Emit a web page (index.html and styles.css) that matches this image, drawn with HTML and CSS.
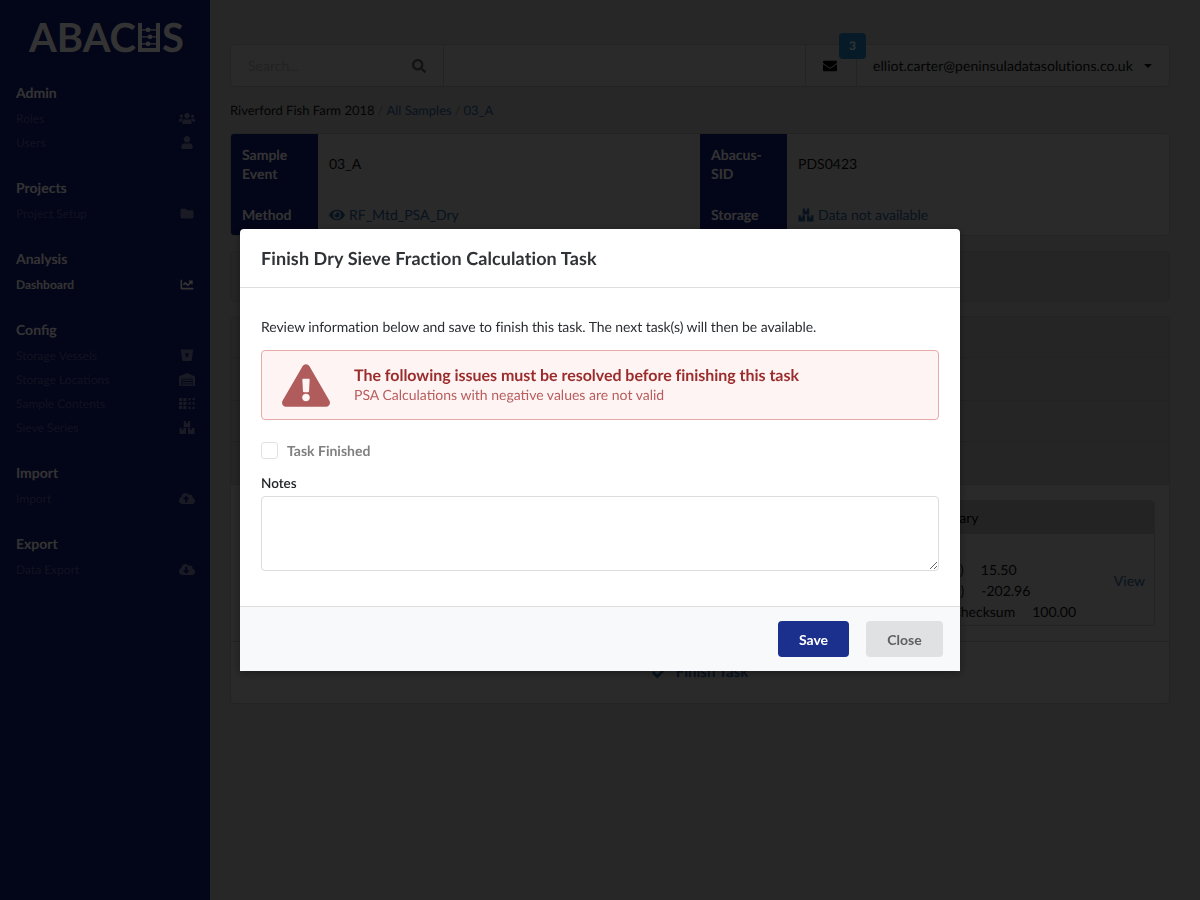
FILE: index.html
```html
<!DOCTYPE html>
<html lang="en">
<head>
<meta charset="utf-8">
<title>Abacus</title>
<link rel="stylesheet" href="styles.css">
</head>
<body>
<svg class="defs" aria-hidden="true">
  <symbol id="i-users" viewBox="0 0 640 512"><path d="M96 224c35.3 0 64-28.7 64-64s-28.7-64-64-64-64 28.7-64 64 28.7 64 64 64zm448 0c35.3 0 64-28.7 64-64s-28.7-64-64-64-64 28.7-64 64 28.7 64 64 64zm32 32h-64c-17.6 0-33.5 7.1-45.1 18.6 40.3 22.1 68.9 62 75.1 109.4h66c17.7 0 32-14.3 32-32v-32c0-35.3-28.7-64-64-64zm-256 0c61.9 0 112-50.1 112-112S381.9 32 320 32 208 82.1 208 144s50.1 112 112 112zm76.8 32h-8.3c-20.8 10-43.9 16-68.5 16s-47.6-6-68.5-16h-8.3C179.6 288 128 339.6 128 403.2V432c0 26.5 21.5 48 48 48h288c26.5 0 48-21.5 48-48v-28.8c0-63.6-51.6-115.2-115.2-115.2zm-223.7-13.4C161.5 263.1 145.6 256 128 256H64c-35.3 0-64 28.7-64 64v32c0 17.7 14.3 32 32 32h65.9c6.3-47.4 34.9-87.3 75.2-109.4z"/></symbol>
  <symbol id="i-user" viewBox="0 0 448 512"><path d="M224 256c70.7 0 128-57.3 128-128S294.7 0 224 0 96 57.3 96 128s57.3 128 128 128zm89.6 32h-16.7c-22.2 10.2-46.9 16-72.9 16s-50.6-5.8-72.9-16h-16.7C60.2 288 0 348.2 0 422.4V464c0 26.5 21.5 48 48 48h352c26.5 0 48-21.5 48-48v-41.6c0-74.2-60.2-134.4-134.4-134.4z"/></symbol>
  <symbol id="i-folder" viewBox="0 0 512 512"><path d="M464 128H272l-64-64H48C21.49 64 0 85.49 0 112v288c0 26.51 21.49 48 48 48h416c26.51 0 48-21.49 48-48V176c0-26.51-21.49-48-48-48z"/></symbol>
  <symbol id="i-chart" viewBox="0 0 512 512"><path d="M496 384H64V80c0-8.84-7.16-16-16-16H16C7.16 64 0 71.16 0 80v336c0 17.67 14.33 32 32 32h464c8.84 0 16-7.16 16-16v-32c0-8.84-7.16-16-16-16zM464 96H345.94c-21.38 0-32.09 25.85-16.97 40.97l32.4 32.4L288 242.75l-73.37-73.37c-12.5-12.5-32.76-12.5-45.25 0l-68.69 68.69c-6.25 6.25-6.25 16.38 0 22.63l22.62 22.62c6.25 6.25 16.38 6.25 22.63 0L192 237.25l73.37 73.37c12.5 12.5 32.76 12.5 45.25 0l96-96 32.4 32.4c15.12 15.12 40.97 4.41 40.97-16.97V112c.01-8.84-7.15-16-15.99-16z"/></symbol>
  <symbol id="i-vessel" viewBox="0 0 512 512"><path fill-rule="evenodd" d="M32 16h448c14 0 22 10 20 24l-56 400c-3 20-14 32-34 32H102c-20 0-31-12-34-32L12 40c-2-14 6-24 20-24zM176 170h160l-40 130c-4 14-12 20-24 20h-32c-12 0-20-6-24-20z"/></symbol>
  <symbol id="i-warehouse" viewBox="0 0 640 512"><path d="M504 352H136.4c-4.4 0-8 3.6-8 8l-.1 48c0 4.4 3.6 8 8 8H504c4.4 0 8-3.6 8-8v-48c0-4.4-3.6-8-8-8zm0 96H136.1c-4.4 0-8 3.6-8 8l-.1 48c0 4.4 3.6 8 8 8h368c4.4 0 8-3.6 8-8v-48c0-4.4-3.6-8-8-8zm0-192H136.6c-4.4 0-8 3.6-8 8l-.1 48c0 4.4 3.6 8 8 8H504c4.4 0 8-3.6 8-8v-48c0-4.4-3.6-8-8-8zm106.5-139L338.4 3.7a48.15 48.15 0 0 0-36.9 0L29.5 117C11.7 124.5 0 141.9 0 161.3V504c0 4.4 3.6 8 8 8h80c4.4 0 8-3.6 8-8V256c0-17.6 14.6-32 32.6-32h382.8c18 0 32.6 14.4 32.6 32v248c0 4.4 3.6 8 8 8h80c4.4 0 8-3.6 8-8V161.3c0-19.4-11.7-36.8-29.5-44.3z"/></symbol>
  <symbol id="i-grid" viewBox="0 0 640 512"><path d="M0 32h128v128H0zM170 32h128v128H170zM0 192h128v128H0zM170 192h128v128H170zM0 352h128v128H0zM170 352h128v128H170z"/><path d="M380 32h90v90h-90zM540 32h90v90h-90zM380 210h90v90h-90zM540 210h90v90h-90zM380 390h90v90h-90zM540 390h90v90h-90z"/></symbol>
  <symbol id="i-cubes" viewBox="0 0 640 512"><path fill-rule="evenodd" d="M190 0h90v90h80V0h90v240H190zM20 270h90v90h60v-90h110v242H20zM360 270h90v90h60v-90h110v242H360z"/></symbol>
  <symbol id="i-up" viewBox="0 0 640 512"><path d="M537.6 226.6c4.1-10.7 6.4-22.4 6.4-34.6 0-53-43-96-96-96-19.7 0-38.1 6-53.3 16.2C367 64.2 315.3 32 256 32c-88.4 0-160 71.6-160 160 0 2.7.1 5.4.2 8.1C40.2 219.8 0 273.2 0 336c0 79.5 64.5 144 144 144h368c70.7 0 128-57.3 128-128 0-61.9-44-113.6-102.4-125.4zM393.4 288H328v112c0 8.8-7.2 16-16 16h-48c-8.8 0-16-7.2-16-16V288h-65.4c-14.3 0-21.4-17.2-11.3-27.3l105.4-105.4c6.2-6.2 16.4-6.2 22.6 0l105.4 105.4c10.1 10.1 3 27.3-11.3 27.3z"/></symbol>
  <symbol id="i-down" viewBox="0 0 640 512"><path d="M537.6 226.6c4.1-10.7 6.4-22.4 6.4-34.6 0-53-43-96-96-96-19.7 0-38.1 6-53.3 16.2C367 64.2 315.3 32 256 32c-88.4 0-160 71.6-160 160 0 2.7.1 5.4.2 8.1C40.2 219.8 0 273.2 0 336c0 79.5 64.5 144 144 144h368c70.7 0 128-57.3 128-128 0-61.9-44-113.6-102.4-125.4zm-132.9 88.7L299.3 420.7c-6.2 6.2-16.4 6.2-22.6 0L171.3 315.3c-10.1-10.1-2.9-27.3 11.3-27.3H248V176c0-8.8 7.2-16 16-16h48c8.8 0 16 7.2 16 16v112h65.4c14.2 0 21.4 17.2 11.3 27.3z"/></symbol>
  <symbol id="i-search" viewBox="0 0 512 512"><path d="M505 442.7L405.3 343c-4.5-4.5-10.6-7-17-7H372c27.6-35.3 44-79.7 44-128C416 93.1 322.9 0 208 0S0 93.1 0 208s93.1 208 208 208c48.3 0 92.7-16.4 128-44v16.3c0 6.4 2.5 12.5 7 17l99.7 99.7c9.4 9.4 24.6 9.4 33.9 0l28.3-28.3c9.4-9.4 9.4-24.6.1-34zM208 336c-70.7 0-128-57.2-128-128 0-70.7 57.2-128 128-128 70.7 0 128 57.2 128 128 0 70.7-57.2 128-128 128z"/></symbol>
  <symbol id="i-mail" viewBox="0 0 512 512"><path d="M502.3 190.8c3.9-3.1 9.7-.2 9.7 4.7V400c0 26.5-21.5 48-48 48H48c-26.5 0-48-21.5-48-48V195.6c0-5 5.7-7.8 9.7-4.7 22.4 17.4 52.1 39.5 154.1 113.6 21.1 15.4 56.7 47.8 92.2 47.6 35.7.3 72-32.8 92.3-47.6 102-74.1 131.6-96.3 154-113.7zM256 320c23.2.4 56.6-29.2 73.4-41.4 132.7-96.3 142.8-104.7 173.4-128.7 5.8-4.5 9.2-11.5 9.2-18.9v-19c0-26.5-21.5-48-48-48H48C21.5 64 0 85.5 0 112v19c0 7.4 3.4 14.3 9.2 18.9 30.6 23.9 40.7 32.4 173.4 128.7 16.8 12.2 50.2 41.8 73.4 41.4z"/></symbol>
  <symbol id="i-eye" viewBox="0 0 576 512"><path d="M572.52 241.4C518.29 135.59 410.93 64 288 64S57.68 135.64 3.48 241.41a32.35 32.35 0 0 0 0 29.19C57.71 376.41 165.07 448 288 448s230.32-71.64 284.52-177.41a32.35 32.35 0 0 0 0-29.19zM288 400a144 144 0 1 1 144-144 143.93 143.93 0 0 1-144 144zm0-240a95.31 95.31 0 0 0-25.31 3.79 47.85 47.85 0 0 1-66.9 66.9A95.78 95.78 0 1 0 288 160z"/></symbol>
  <symbol id="i-check" viewBox="0 0 512 512"><path d="M173.898 439.404l-166.4-166.4c-9.997-9.997-9.997-26.206 0-36.204l36.203-36.204c9.997-9.998 26.207-9.998 36.204 0L192 312.69 432.095 72.596c9.997-9.997 26.207-9.997 36.204 0l36.203 36.204c9.997 9.997 9.997 26.206 0 36.204l-294.4 294.401c-9.998 9.997-26.207 9.997-36.204-.001z"/></symbol>
  <symbol id="i-warn" viewBox="0 0 576 512"><path d="M569.517 440.013C587.975 472.007 564.806 512 527.94 512H48.054c-36.937 0-59.999-40.055-41.577-71.987L246.423 23.985c18.467-32.009 64.72-31.951 83.154 0l239.94 416.028zM288 354c-25.405 0-46 20.595-46 46s20.595 46 46 46 46-20.595 46-46-20.595-46-46-46zm-43.673-165.346l7.418 136c.347 6.364 5.609 11.346 11.982 11.346h48.546c6.373 0 11.635-4.982 11.982-11.346l7.418-136c.375-6.874-5.098-12.654-11.982-12.654h-63.383c-6.884 0-12.356 5.78-11.981 12.654z"/></symbol>
</svg>

<div class="app">
  <aside class="sidebar">
    <div class="logo">ABAC<svg class="logo-u" viewBox="0 0 22 29"><path d="M0 0h4v25h14V0h4v29H0z"/><circle cx="10" cy="6.8" r="2.4"/><circle cx="12" cy="13.8" r="2.4"/><circle cx="10" cy="20.8" r="2.4"/><path d="M4 6.2h14v1.2H4zM4 13.2h14v1.2H4zM4 20.2h14v1.2H4z"/></svg>S</div>
    <nav>
      <div class="nav-group">
        <div class="nav-title">Admin</div>
        <a class="nav-item"><span>Roles</span><svg class="nav-icon"><use href="#i-users"/></svg></a>
        <a class="nav-item"><span>Users</span><svg class="nav-icon"><use href="#i-user"/></svg></a>
      </div>
      <div class="nav-group">
        <div class="nav-title">Projects</div>
        <a class="nav-item"><span>Project Setup</span><svg class="nav-icon"><use href="#i-folder"/></svg></a>
      </div>
      <div class="nav-group">
        <div class="nav-title">Analysis</div>
        <a class="nav-item active"><span>Dashboard</span><svg class="nav-icon"><use href="#i-chart"/></svg></a>
      </div>
      <div class="nav-group">
        <div class="nav-title">Config</div>
        <a class="nav-item"><span>Storage Vessels</span><svg class="nav-icon"><use href="#i-vessel"/></svg></a>
        <a class="nav-item"><span>Storage Locations</span><svg class="nav-icon"><use href="#i-warehouse"/></svg></a>
        <a class="nav-item"><span>Sample Contents</span><svg class="nav-icon"><use href="#i-grid"/></svg></a>
        <a class="nav-item"><span>Sieve Series</span><svg class="nav-icon"><use href="#i-cubes"/></svg></a>
      </div>
      <div class="nav-group">
        <div class="nav-title">Import</div>
        <a class="nav-item"><span>Import</span><svg class="nav-icon"><use href="#i-up"/></svg></a>
      </div>
      <div class="nav-group">
        <div class="nav-title">Export</div>
        <a class="nav-item"><span>Data Export</span><svg class="nav-icon"><use href="#i-down"/></svg></a>
      </div>
    </nav>
  </aside>

  <main class="main">
    <header class="topbar">
      <div class="search"><span class="search-ph">Search...</span><svg class="search-icon"><use href="#i-search"/></svg></div>
      <div class="topbar-fill"></div>
      <div class="mail"><svg class="mail-icon"><use href="#i-mail"/></svg><span class="badge">3</span></div>
      <div class="account"><span class="email">elliot.carter@peninsuladatasolutions.co.uk</span><span class="caret"></span></div>
    </header>

    <div class="crumbs"><span>Riverford Fish Farm 2018</span><span class="sep">/</span><a>All Samples</a><span class="sep">/</span><a>03_A</a></div>

    <section class="card details">
      <div class="dt">Sample Event</div>
      <div class="dd first">03_A</div>
      <div class="dt">Abacus-SID</div>
      <div class="dd first">PDS0423</div>
      <div class="dt">Method</div>
      <div class="dd link"><svg class="link-icon"><use href="#i-eye"/></svg>RF_Mtd_PSA_Dry</div>
      <div class="dt">Storage</div>
      <div class="dd link"><svg class="link-icon"><use href="#i-cubes"/></svg>Data not available</div>
    </section>

    <section class="card blank"></section>

    <section class="card tasks">
      <div class="task-row r1"></div>
      <div class="task-row r2"></div>
      <div class="task-row r3"></div>
      <div class="task-row r4"></div>
      <div class="task-panel">
        <div class="summary">
          <div class="summary-head">Summary</div>
          <div class="summary-body">
            <div class="summary-list">
              <div class="summary-line"><span>Dry (g)</span><span>15.50</span></div>
              <div class="summary-line"><span>Net (g)</span><span>-202.96</span></div>
              <div class="summary-line"><span>PSA Checksum</span><span>100.00</span></div>
            </div>
            <a class="view">View</a>
          </div>
        </div>
      </div>
      <div class="task-foot"><svg class="foot-icon"><use href="#i-check"/></svg>Finish Task</div>
    </section>
  </main>
</div>

<div class="backdrop"></div>

<div class="modal" role="dialog">
  <div class="modal-head">Finish Dry Sieve Fraction Calculation Task</div>
  <div class="modal-body">
    <p class="intro">Review information below and save to finish this task. The next task(s) will then be available.</p>
    <div class="alert">
      <svg class="alert-icon"><use href="#i-warn"/></svg>
      <div>
        <div class="alert-title">The following issues must be resolved before finishing this task</div>
        <div class="alert-text">PSA Calculations with negative values are not valid</div>
      </div>
    </div>
    <div class="check-row"><span class="checkbox"></span><span>Task Finished</span></div>
    <label class="notes-label" for="notes">Notes</label>
    <textarea id="notes" class="notes"></textarea>
  </div>
  <div class="modal-foot">
    <button class="btn btn-save">Save</button>
    <button class="btn btn-close">Close</button>
  </div>
</div>
</body>
</html>
```
FILE: styles.css
```css
* { box-sizing: border-box; }
html, body { margin: 0; height: 100%; }
body {
  font-family: Lato, "Noto Sans", sans-serif;
  font-size: 14px;
  line-height: 19px;
  color: #212529;
  background: #c4c4c4;
  overflow: hidden;
  text-rendering: geometricPrecision;
}
.defs { display: none; }

.app { display: flex; height: 900px; }

/* sidebar */
.sidebar { width: 210px; flex: none; background: #121a78; color: #fff; }
.logo {
  display: flex;
  align-items: center;
  justify-content: center;
  height: 74px;
  padding: 0 0 0 3px;
  font-size: 40px;
  line-height: 1;
  font-weight: 700;
  color: #fff;
}
.logo-u { width: 22px; height: 29px; margin: 0 2px; fill: #fff; }
nav { padding-top: 8px; }
.nav-group { margin-bottom: 23px; }
.nav-title { padding: 0 16px; margin-bottom: 3px; font-weight: 700; line-height: 21px; color: #fff; }
.nav-item {
  display: flex;
  align-items: center;
  justify-content: space-between;
  height: 24px;
  padding: 0 15px 0 16px;
  font-size: 12px;
  color: rgba(255, 255, 255, .3);
}
.nav-item.active { font-weight: 700; color: #fff; }
.nav-icon { width: 16px; height: 13px; fill: rgba(255, 255, 255, .45); }
.nav-item.active .nav-icon { fill: #fff; }

/* main */
.main { flex: 1; min-width: 0; padding: 44px 30px 0 20px; }
.topbar {
  display: flex;
  height: 43px;
  background: #cfcfcf;
  border: 1px solid #b0b0b0;
  border-radius: 4px;
}
.search {
  display: flex;
  align-items: center;
  justify-content: space-between;
  width: 213px;
  padding: 0 17px;
  border-right: 1px solid #b0b0b0;
}
.search-ph { color: #a8a8a8; }
.search-icon { width: 14px; height: 14px; fill: #5c5c5c; }
.topbar-fill { flex: 1; }
.mail {
  position: relative;
  display: flex;
  align-items: center;
  justify-content: center;
  width: 52px;
  padding-right: 2px;
  border-left: 1px solid #b0b0b0;
  border-right: 1px solid #b0b0b0;
}
.mail-icon { width: 14px; height: 14px; fill: #000; }
.badge {
  position: absolute;
  left: 33px;
  top: -12px;
  width: 27px;
  height: 26px;
  border-radius: 4px;
  background: #1f86c4;
  color: #fff;
  font-size: 12px;
  font-weight: 700;
  line-height: 26px;
  text-align: center;
}
.account {
  display: flex;
  align-items: center;
  justify-content: space-between;
  width: 312px;
  padding: 0 17px 0 16px;
  flex: none;
  color: #111;
}
.email { letter-spacing: .05px; }
.caret {
  width: 0;
  height: 0;
  border-left: 4px solid transparent;
  border-right: 4px solid transparent;
  border-top: 4px solid #111;
}

.crumbs { display: flex; height: 46px; align-items: center; font-size: 13px; color: #111; }
.crumbs .sep { padding: 0 3px; color: #8a8a8a; }
.crumbs a { color: #2a5f96; }

.card {
  background: #cfcfcf;
  border: 1px solid #b0b0b0;
  border-radius: 4px;
  overflow: hidden;
}
.details {
  display: grid;
  grid-template-columns: 87px 382px 87px 1fr;
  height: 103px;
  margin-bottom: 15px;
}
.dt { padding: 11px; background: #121a78; color: #fff; font-weight: 700; }
.dd { display: flex; align-items: center; padding: 11px; color: #111; }
.dd.first { padding-top: 10px; padding-bottom: 12px; }
.dd.link { color: #2a5f96; }
.link-icon { width: 16px; height: 14px; margin-right: 4px; fill: #2a5f96; }

.blank { height: 51px; margin-bottom: 14px; background: #bababa; }

.tasks { height: 388px; }
.task-row { background: #bababa; border-bottom: 1px solid #adadad; }
.r1 { height: 41px; }
.r2 { height: 43px; }
.r3 { height: 41px; }
.r4 { height: 43px; }
.task-panel { display: flex; justify-content: flex-end; height: 157px; padding: 15px 14px 15px; border-bottom: 1px solid #b0b0b0; }
.summary { width: 250px; border: 1px solid #b5b5b5; border-radius: 4px; overflow: hidden; }
.summary-head { height: 33px; padding: 0 15px; line-height: 34px; background: #b0b0b0; color: #000; }
.summary-body { display: flex; align-items: center; justify-content: space-between; height: 92px; padding: 20px 9px 0 17px; }
.summary-line { display: flex; gap: 17px; line-height: 21px; color: #111; }
.view { color: #2a5f96; margin-bottom: 20px; }
.task-foot {
  display: flex;
  align-items: center;
  justify-content: center;
  gap: 10px;
  height: 61px;
  font-size: 15px;
  font-weight: 700;
  color: #2a5f96;
}
.foot-icon { width: 14px; height: 14px; fill: #2a5f96; }

/* backdrop + modal */
.backdrop { position: fixed; inset: 0; background: rgba(0, 0, 0, .8); }
.modal {
  position: fixed;
  left: 240px;
  top: 229px;
  width: 720px;
  height: 442px;
  display: flex;
  flex-direction: column;
  background: #fff;
  border-radius: 4px 4px 0 0;
  box-shadow: 0 2px 10px rgba(0, 0, 0, .35);
  overflow: hidden;
}
.modal-head {
  height: 59px;
  padding: 0 21px;
  border-bottom: 1px solid #dedede;
  font-size: 18px;
  font-weight: 700;
  line-height: 58px;
  letter-spacing: .1px;
  color: #2f3236;
}
.modal-body { flex: 1; padding: 29px 21px 0; }
.intro { margin: 0 0 14px; letter-spacing: -.065px; color: #2b2e32; }
.alert {
  display: flex;
  align-items: center;
  gap: 24px;
  height: 70px;
  padding: 0 20px;
  background: #fef4f4;
  border: 1px solid #e8a9a9;
  border-radius: 4px;
  margin-bottom: 21px;
}
.alert-icon { width: 48px; height: 43px; flex: none; fill: #b05c5c; }
.alert-title { font-size: 16px; font-weight: 700; line-height: 19px; letter-spacing: -.03px; color: #9b2c2c; margin-top: -1px; }
.alert-text { line-height: 19px; color: #b85c5c; }
.check-row { display: flex; align-items: center; gap: 9px; height: 18px; font-weight: 700; color: #808080; margin-bottom: 15px; }
.checkbox { width: 17px; height: 17px; border: 1px solid #e2e2e2; border-radius: 3px; }
.notes-label { display: block; font-weight: 600; font-size: 13.5px; line-height: 19px; color: #212529; margin-bottom: 3px; }
.notes {
  display: block;
  width: 100%;
  height: 75px;
  border: 1px solid #dcdcdc;
  border-radius: 4px;
  background: #fff;
  outline: none;
}
.modal-foot {
  display: flex;
  justify-content: flex-end;
  gap: 17px;
  height: 65px;
  padding: 14px 17px;
  background: #f8f9fb;
  border-top: 1px solid #dedede;
}
.btn {
  height: 36px;
  border: 0;
  border-radius: 4px;
  font: 700 14px/36px Lato, "Noto Sans", sans-serif;
}
.btn-save { width: 71px; background: #1b2f8c; color: #fff; }
.btn-close { width: 77px; background: #e0e1e3; color: #5f6063; }
```
